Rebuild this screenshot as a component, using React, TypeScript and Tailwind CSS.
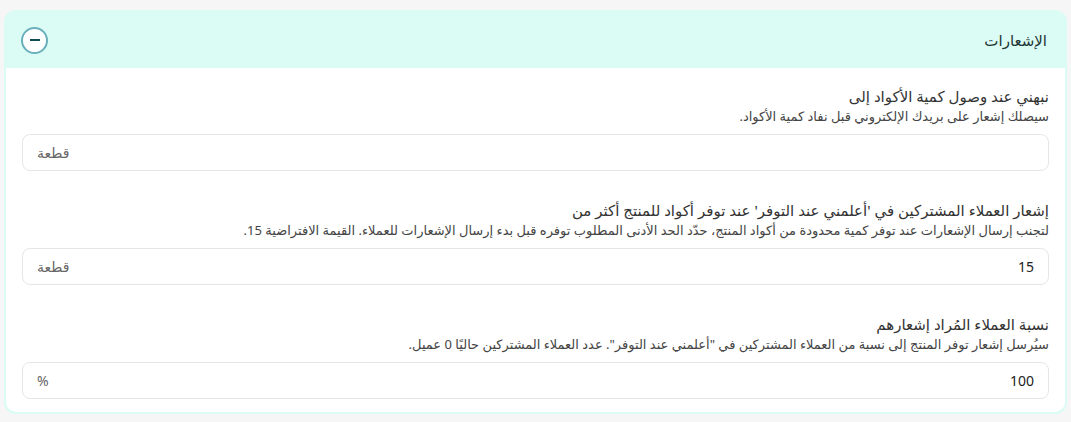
import React from 'react';

const font = { fontFamily: '"Noto Sans", "DejaVu Sans", sans-serif' };

type FieldProps = {
  label: string;
  hint: string;
  value?: string;
  suffix: string;
};

function Field({ label, hint, value, suffix }: FieldProps) {
  return (
    <div className="flex flex-col">
      <label className="text-[15px] leading-[21px] text-[#333]">{label}</label>
      <p className="text-[13px] leading-[19px] text-[#444]">{hint}</p>
      <div className="mt-[8px] flex h-[37px] items-center justify-between rounded-lg border border-[#e6e6e6] bg-white px-[14px]">
        <span className="text-[14px] text-[#222]">{value ?? ''}</span>
        <span className="text-[14px] text-[#666]">{suffix}</span>
      </div>
    </div>
  );
}

export default function App() {
  return (
    <div dir="rtl" style={font} className="min-h-[422px] bg-[#f6f6f6] px-1 pt-[10px]">
      <div className="rounded-xl bg-[#dafcf4] p-[2px]">
        {/* header */}
        <div className="flex h-[56px] items-center justify-between pl-[15px] pr-[18px]">
          <h2 className="text-[15px] font-medium text-[#1d3535]">الإشعارات</h2>
          <button className="flex h-[27px] w-[27px] items-center justify-center rounded-full border-2 border-[#6aafbc] bg-white">
            <span className="block h-[1.5px] w-[10px] bg-[#0f4c52]" />
          </button>
        </div>

        {/* body */}
        <div className="flex flex-col gap-[29px] rounded-b-[10px] bg-white px-4 pb-[13px] pt-[18px]">
          <Field
            label="نبهني عند وصول كمية الأكواد إلى"
            hint="سيصلك إشعار على بريدك الإلكتروني قبل نفاد كمية الأكواد."
            suffix="قطعة"
          />
          <Field
            label="إشعار العملاء المشتركين في 'أعلمني عند التوفر' عند توفر أكواد للمنتج أكثر من"
            hint="لتجنب إرسال الإشعارات عند توفر كمية محدودة من أكواد المنتج، حدّد الحد الأدنى المطلوب توفره قبل بدء إرسال الإشعارات للعملاء. القيمة الافتراضية 15."
            value="15"
            suffix="قطعة"
          />
          <Field
            label="نسبة العملاء المُراد إشعارهم"
            hint={'سيُرسل إشعار توفر المنتج إلى نسبة من العملاء المشتركين في "أعلمني عند التوفر". عدد العملاء المشتركين حاليًا 0 عميل.'}
            value="100"
            suffix="%"
          />
        </div>
      </div>
    </div>
  );
}
